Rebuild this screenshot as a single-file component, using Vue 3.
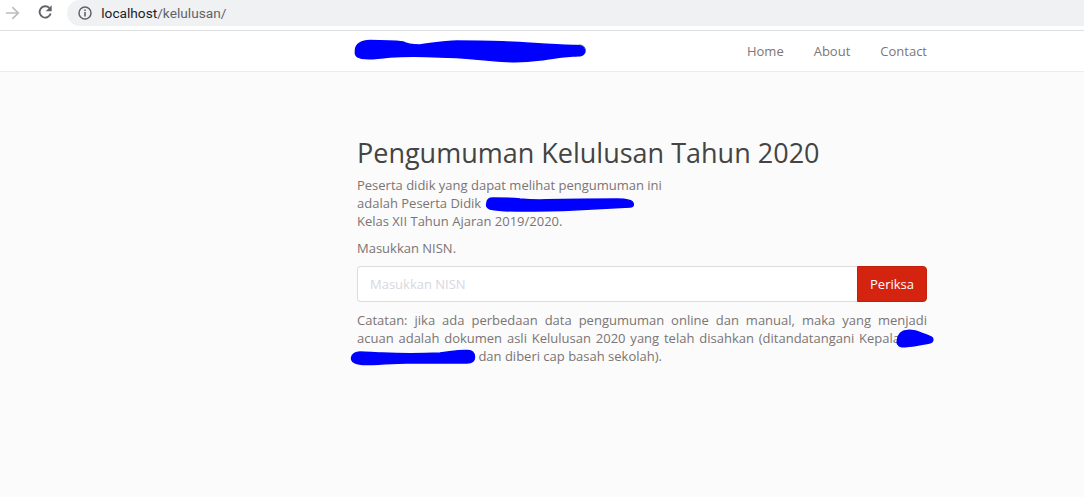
<script setup>
const links = ['Home', 'About', 'Contact']
</script>

<template>
  <div class="page">
    <div class="chrome">
      <svg class="back" width="16" height="16" viewBox="0 0 16 16"><path d="M1 8h13.5M8 1.7L14.5 8 8 14.3" fill="none" stroke="#bdbdbd" stroke-width="1.9"/></svg>
      <svg class="reload" width="16" height="16" viewBox="0 0 16 16"><path d="M13.9 9.7A6.2 6.2 0 1 1 12.4 3.6" fill="none" stroke="#5f6368" stroke-width="2"/><path d="M15 .6v6.6H8.4z" fill="#5f6368"/></svg>
      <div class="omnibox">
        <svg width="14" height="14" viewBox="0 0 14 14"><circle cx="7" cy="7" r="6" fill="none" stroke="#5f6368" stroke-width="1.5"/><path d="M7 6v4.4M7 3.4v1.6" stroke="#5f6368" stroke-width="1.6"/></svg>
        <span class="url"><span class="host">localhost</span>/kelulusan/</span>
      </div>
    </div>
    <nav class="nav">
      <div class="nav-inner">
        <span class="brand"></span>
        <div class="links"><a v-for="l in links" :key="l">{{ l }}</a></div>
      </div>
    </nav>
    <main class="main">
      <h1>Pengumuman Kelulusan Tahun 2020</h1>
      <p class="intro">Peserta didik yang dapat melihat pengumuman ini<br>adalah Peserta Didik <br>Kelas XII Tahun Ajaran 2019/2020.</p>
      <p class="prompt">Masukkan NISN.</p>
      <form class="group" @submit.prevent>
        <input placeholder="Masukkan NISN">
        <button>Periksa</button>
      </form>
      <p class="note">Catatan: jika ada perbedaan data pengumuman online dan manual, maka yang menjadi acuan adalah dokumen asli Kelulusan 2020 yang telah disahkan (ditandatangani Kepala<span class="gap-a"></span> <span class="gap-b"></span> dan diberi cap basah sekolah).</p>
    </main>
    <svg class="ink" width="1084" height="497" viewBox="0 0 1084 497">
      <circle cx="580" cy="50.5" r="5.5" fill="#fff" stroke="#666" stroke-width="1"/>
      <g fill="#0000ff" stroke="#0000ff" stroke-width="1.5" stroke-linejoin="round">
        <path d="M355.500 51C355 44 362 40.500 370 40.500C380 40.500 395 41 403 42C408 45 414 45 420 45C435 43 445 41 457 41C475 41 490 41 507 42C530 43 550 45 573 45.500C582 45 584.500 47 584.500 51C584.500 55 581 56 573 56C558 57 548 59 540 60C525 62 515 62 507 61.500C485 61 465 57 440 57C420 56 405 56 390 57C375 59 362 60 358 57C356 56 355 54 355.500 51Z"/>
        <path d="M487 203C487 199 490 198 493 198C505 198 512 198 520 199C530 200 535 200 540 200C565 199 590 199 617 199C625 199 632 200 633 203C634 206 632 207 630 207C610 208 590 209 573 210C555 211 535 211 517 211C505 211 495 210 490 209C487 208 486 206 487 203Z"/>
        <path d="M897.500 340C898 334 902 330.500 907 330.500C912 330 917 331 921 333C926 335 930 336 932.500 338C934 341 932 343 927 343.500C920 344.500 914 346 907 346.500C903 347 900 347 898.500 345C897 344 897 342 897.500 340Z"/>
        <path d="M351.500 358C352 354 356 352 360 352C368 352 375 353 383 353C400 354 420 354 440 353C450 352 458 350 467 350.500C472 350 474.500 353 474.500 357C474.500 361 472 363 467 363C450 363 428 363 407 363C395 363 385 364 373 364.500C362 365 351 364 351.500 358Z"/>
      </g>
    </svg>
  </div>
</template>

<style>
html, body { margin: 0; background: #fbfbfb; }
</style>

<style scoped>
.page { position: relative; width: 1084px; height: 497px; overflow: hidden; background: #fbfbfb; font-family: "Open Sans", sans-serif; color: #7a7474; font-size: 13px; }
.chrome { height: 30px; background: #fff; border-bottom: 1px solid #dedfe1; display: flex; align-items: flex-start; }
.back { margin-left: 5px; margin-top: 5px; }
.reload { margin-left: 18px; margin-top: 4px; }
.omnibox { margin-left: 15px; width: 1100px; height: 26px; border-radius: 0 0 0 13px; border-top-left-radius: 13px; background: #f0f1f3; display: flex; align-items: center; padding-left: 11px; gap: 9px; }
.url { font-family: "Roboto", sans-serif; font-size: 13.7px; color: #5f6368; }
.host { color: #202124; }
.nav { height: 40px; background: #fff; border-bottom: 1px solid #ececec; }
.nav-inner { margin-left: 357px; width: 570px; height: 100%; display: flex; justify-content: space-between; align-items: center; }
.links { display: flex; gap: 30px; }
.links a { font-size: 13px; color: #7d7676; }
.main { margin-left: 357px; width: 570px; padding-top: 63px; }
h1 { margin: 0; font-size: 27px; line-height: 36px; font-weight: 400; color: #444; }
p { margin: 0; line-height: 18px; }
.intro { margin-top: 5px; }
.prompt { margin-top: 9px; }
.group { display: flex; height: 36px; margin-top: 9px; }
input { flex: 1; min-width: 0; box-sizing: border-box; border: 1px solid #ddd; border-right: 0; border-radius: 4px 0 0 4px; background: #fff; padding: 0 12px; font: 13px "Open Sans", sans-serif; outline: none; }
input::placeholder { color: #d6d8df; opacity: 1; }
button { width: 70px; border: 1px solid #c4200d; border-radius: 0 4px 4px 0; background: #d4230f; color: #fff; font: 13px "Open Sans", sans-serif; padding: 0; }
.note { margin-top: 9px; text-align: justify; }
.gap-a { display: inline-block; width: 27px; }
.gap-b { display: inline-block; width: 118px; }
.ink { position: absolute; left: 0; top: 0; pointer-events: none; }
</style>
